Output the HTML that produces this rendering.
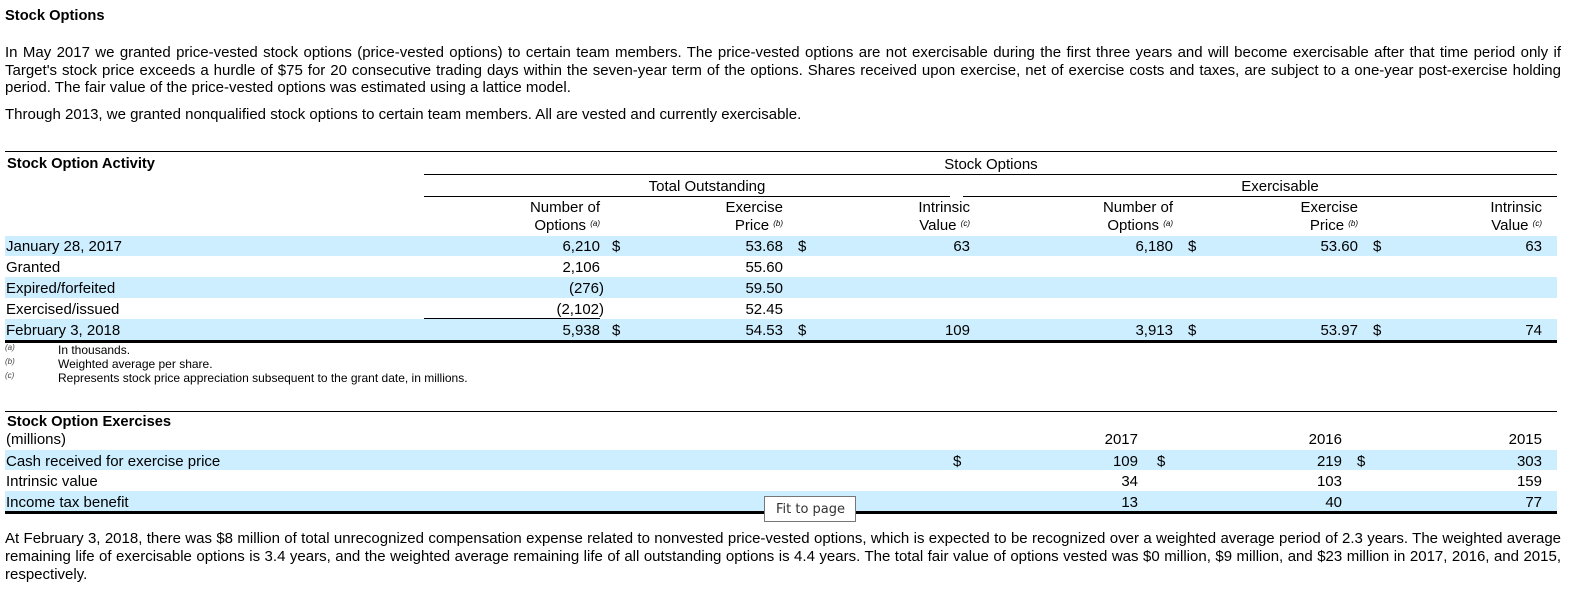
<!DOCTYPE html>
<html><head><meta charset="utf-8"><style>
*{margin:0;padding:0;box-sizing:border-box}
body{width:1572px;height:590px;position:relative;background:#fff;font-family:"Liberation Sans",Arial,sans-serif;color:#000;font-size:15px;overflow:hidden}
.a{position:absolute;white-space:nowrap;line-height:17px}
.r{position:absolute;white-space:nowrap;line-height:17px;text-align:right;width:300px}
.h{line-height:16px}
.c{position:absolute;white-space:nowrap;line-height:17px;text-align:center;width:300px}
.pl{position:absolute;left:5px;width:1556px;text-align:justify;text-align-last:justify;line-height:17.5px;font-size:15px;white-space:nowrap}
.pn{text-align-last:left}
.b{font-weight:bold;font-size:14.7px}
.band{position:absolute;left:5px;width:1552px;background:#cceeff}
.ln{position:absolute;background:#000;height:1px}
.tk{position:absolute;background:#000;height:3px}
sup{font-size:8px;font-style:italic;vertical-align:4px}
.fn{position:absolute;font-size:12px;line-height:13px;white-space:nowrap}
.fm{position:absolute;font-size:8px;font-style:italic;color:#444;left:5px}
</style></head><body>
<div class="a b" style="left:5px;top:8px">Stock Options</div>
<div class="pl" style="top:44px">In May 2017 we granted price-vested stock options (price-vested options) to certain team members. The price-vested options are not exercisable during the first three years and will become exercisable after that time period only if</div>
<div class="pl" style="top:62px">Target's stock price exceeds a hurdle of $75 for 20 consecutive trading days within the seven-year term of the options. Shares received upon exercise, net of exercise costs and taxes, are subject to a one-year post-exercise holding</div>
<div class="pl pn" style="top:79px">period. The fair value of the price-vested options was estimated using a lattice model.</div>
<div class="a" style="left:5px;top:106px">Through 2013, we granted nonqualified stock options to certain team members. All are vested and currently exercisable.</div>

<div class="band" style="top:236px;height:20px"></div>
<div class="band" style="top:277px;height:21px"></div>
<div class="band" style="top:319px;height:21px"></div>
<div class="ln" style="left:5px;width:1552px;top:151px"></div>
<div class="a b" style="left:7px;top:156px">Stock Option Activity</div>
<div class="c" style="left:841px;top:156px">Stock Options</div>
<div class="ln" style="left:424px;width:1133px;top:174px"></div>
<div class="c" style="left:557px;top:178px">Total Outstanding</div>
<div class="c" style="left:1130px;top:178px">Exercisable</div>
<div class="ln" style="left:424px;width:526px;top:196px"></div>
<div class="ln" style="left:963px;width:594px;top:196px"></div>
<div class="r h" style="left:300px;top:200px">Number of<br>Options <sup>(a)</sup></div>
<div class="r h" style="left:483px;top:200px">Exercise<br>Price <sup>(b)</sup></div>
<div class="r h" style="left:670px;top:200px">Intrinsic<br>Value <sup>(c)</sup></div>
<div class="r h" style="left:873px;top:200px">Number of<br>Options <sup>(a)</sup></div>
<div class="r h" style="left:1058px;top:200px">Exercise<br>Price <sup>(b)</sup></div>
<div class="r h" style="left:1242px;top:200px">Intrinsic<br>Value <sup>(c)</sup></div>

<div class="a" style="left:6px;top:238px">January 28, 2017</div>
<div class="a" style="left:6px;top:259px">Granted</div>
<div class="a" style="left:6px;top:280px">Expired/forfeited</div>
<div class="a" style="left:6px;top:301px">Exercised/issued</div>
<div class="a" style="left:6px;top:322px">February 3, 2018</div>

<div class="r" style="left:300px;top:238px">6,210</div>
<div class="r" style="left:300px;top:259px">2,106</div>
<div class="r" style="left:304px;top:280px">(276)</div>
<div class="r" style="left:304px;top:301px">(2,102)</div>
<div class="r" style="left:300px;top:322px">5,938</div>
<div class="ln" style="left:424px;width:176px;top:318px"></div>
<div class="a" style="left:612px;top:238px">$</div>
<div class="a" style="left:612px;top:322px">$</div>
<div class="r" style="left:483px;top:238px">53.68</div>
<div class="r" style="left:483px;top:259px">55.60</div>
<div class="r" style="left:483px;top:280px">59.50</div>
<div class="r" style="left:483px;top:301px">52.45</div>
<div class="r" style="left:483px;top:322px">54.53</div>
<div class="a" style="left:798px;top:238px">$</div>
<div class="a" style="left:798px;top:322px">$</div>
<div class="r" style="left:670px;top:238px">63</div>
<div class="r" style="left:670px;top:322px">109</div>
<div class="r" style="left:873px;top:238px">6,180</div>
<div class="r" style="left:873px;top:322px">3,913</div>
<div class="a" style="left:1188px;top:238px">$</div>
<div class="a" style="left:1188px;top:322px">$</div>
<div class="r" style="left:1058px;top:238px">53.60</div>
<div class="r" style="left:1058px;top:322px">53.97</div>
<div class="a" style="left:1373px;top:238px">$</div>
<div class="a" style="left:1373px;top:322px">$</div>
<div class="r" style="left:1242px;top:238px">63</div>
<div class="r" style="left:1242px;top:322px">74</div>
<div class="tk" style="left:5px;width:1552px;top:340px"></div>

<div class="fm" style="top:343px">(a)</div>
<div class="fn" style="left:58px;top:344px">In thousands.</div>
<div class="fm" style="top:357px">(b)</div>
<div class="fn" style="left:58px;top:358px">Weighted average per share.</div>
<div class="fm" style="top:371px">(c)</div>
<div class="fn" style="left:58px;top:372px">Represents stock price appreciation subsequent to the grant date, in millions.</div>

<div class="band" style="top:450px;height:20px"></div>
<div class="band" style="top:491px;height:20px"></div>
<div class="ln" style="left:5px;width:1552px;top:411px"></div>
<div class="a b" style="left:7px;top:414px">Stock Option Exercises</div>
<div class="a" style="left:6px;top:431px">(millions)</div>
<div class="r" style="left:838px;top:431px">2017</div>
<div class="r" style="left:1042px;top:431px">2016</div>
<div class="r" style="left:1242px;top:431px">2015</div>
<div class="a" style="left:6px;top:453px">Cash received for exercise price</div>
<div class="a" style="left:6px;top:473px">Intrinsic value</div>
<div class="a" style="left:6px;top:494px">Income tax benefit</div>
<div class="a" style="left:953px;top:453px">$</div>
<div class="r" style="left:838px;top:453px">109</div>
<div class="r" style="left:838px;top:473px">34</div>
<div class="r" style="left:838px;top:494px">13</div>
<div class="a" style="left:1157px;top:453px">$</div>
<div class="r" style="left:1042px;top:453px">219</div>
<div class="r" style="left:1042px;top:473px">103</div>
<div class="r" style="left:1042px;top:494px">40</div>
<div class="a" style="left:1357px;top:453px">$</div>
<div class="r" style="left:1242px;top:453px">303</div>
<div class="r" style="left:1242px;top:473px">159</div>
<div class="r" style="left:1242px;top:494px">77</div>
<div class="tk" style="left:5px;width:1552px;top:511px"></div>
<div style="position:absolute;left:764px;top:496px;width:92px;height:26px;background:#fff;border:1px solid #767676;font-family:'DejaVu Sans',sans-serif;font-size:13px;color:#333;padding:5px 0 0 11px;white-space:nowrap">Fit to page</div>

<div class="pl" style="top:530px">At February 3, 2018, there was $8 million of total unrecognized compensation expense related to nonvested price-vested options, which is expected to be recognized over a weighted average period of 2.3 years. The weighted average</div>
<div class="pl" style="top:548px">remaining life of exercisable options is 3.4 years, and the weighted average remaining life of all outstanding options is 4.4 years. The total fair value of options vested was $0 million, $9 million, and $23 million in 2017, 2016, and 2015,</div>
<div class="pl pn" style="top:566px">respectively.</div>
</body></html>
